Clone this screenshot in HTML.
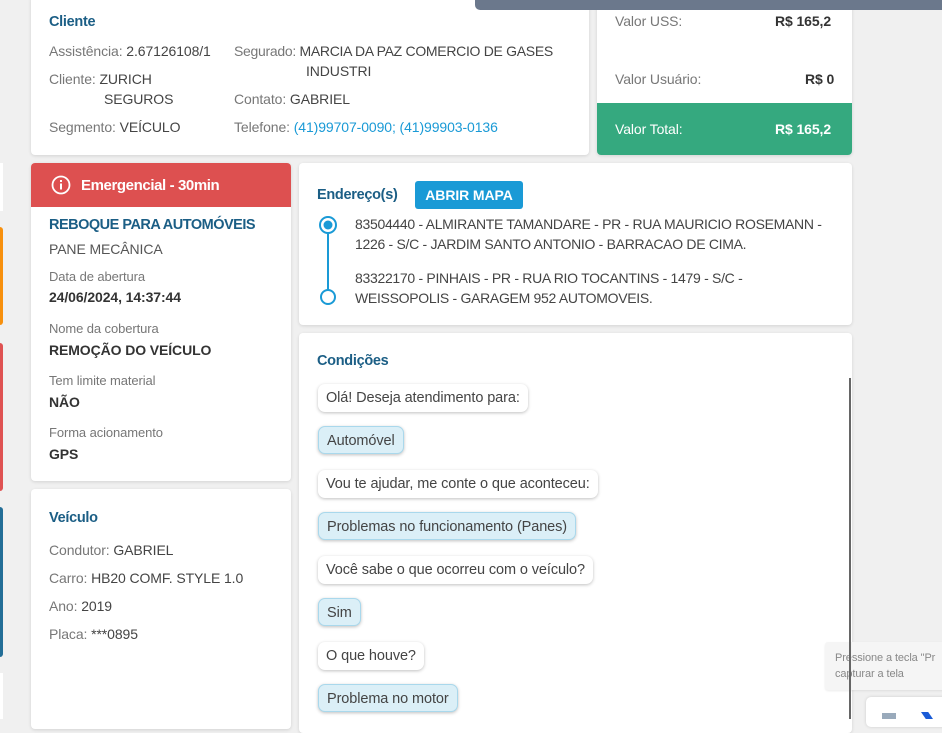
<!DOCTYPE html>
<html><head><meta charset="utf-8"><style>
*{box-sizing:border-box;margin:0;padding:0}
body{width:942px;height:719px;overflow:hidden;background:#f0f0f0;font-family:"Liberation Sans",sans-serif;font-size:14px;color:#444;letter-spacing:-0.1px;position:relative}
.card{position:absolute;background:#fff;border-radius:4px;box-shadow:0 1px 3px rgba(0,0,0,.12)}
.abs{position:absolute;white-space:nowrap}
.t{color:#1b5e85;font-size:14.5px;font-weight:bold;letter-spacing:-0.3px}
.g{color:#777}
.lbl{color:#777;font-size:13px}
.b{font-weight:bold;color:#333}
.bub{position:absolute;left:318px;height:28px;line-height:28px;padding:0 8px;border-radius:7px;background:#fff;box-shadow:0 1px 3px rgba(0,0,0,.25);color:#444;font-size:14.5px;white-space:nowrap;letter-spacing:-0.1px}
.bub.a{background:#dbeff7;border:1px solid #a9d8ec}
</style></head><body>
<div class="abs" style="left:0;top:163px;width:3px;height:48px;background:#fff"></div>
<div class="abs" style="left:0;top:227px;width:3px;height:98px;background:#f7900e;border-radius:0 3px 3px 0"></div>
<div class="abs" style="left:0;top:343px;width:3px;height:148px;background:#df5252;border-radius:0 3px 3px 0"></div>
<div class="abs" style="left:0;top:507px;width:3px;height:150px;background:#236e97;border-radius:0 3px 3px 0"></div>
<div class="abs" style="left:0;top:673px;width:3px;height:46px;background:#fff"></div>

<div class="card" style="left:31px;top:-5px;width:558px;height:160px"></div>
<div class="abs t" style="left:49px;top:14px">Cliente</div>
<div class="abs" style="left:49px;top:43px"><span class="g">Assistência:</span> 2.67126108/1</div>
<div class="abs" style="left:49px;top:71px"><span class="g">Cliente:</span> ZURICH</div>
<div class="abs" style="left:104px;top:91px">SEGUROS</div>
<div class="abs" style="left:49px;top:119px"><span class="g">Segmento:</span> VEÍCULO</div>
<div class="abs" style="left:234px;top:43px;letter-spacing:-0.3px"><span class="g">Segurado:</span> MARCIA DA PAZ COMERCIO DE GASES</div>
<div class="abs" style="left:306px;top:63px">INDUSTRI</div>
<div class="abs" style="left:234px;top:91px"><span class="g">Contato:</span> GABRIEL</div>
<div class="abs" style="left:234px;top:119px"><span class="g">Telefone:</span> <span style="color:#1a9ad6">(41)99707-0090; (41)99903-0136</span></div>

<div class="card" style="left:597px;top:-5px;width:255px;height:160px;overflow:hidden">
<div style="position:absolute;left:0;bottom:0;width:100%;height:52px;background:#35a97f"></div></div>
<div class="abs g" style="left:615px;top:13px">Valor USS:</div>
<div class="abs b" style="left:775px;top:13px">R$ 165,2</div>
<div class="abs g" style="left:615px;top:71px">Valor Usuário:</div>
<div class="abs b" style="left:805px;top:71px">R$ 0</div>
<div class="abs" style="left:615px;top:121px;color:#fff">Valor Total:</div>
<div class="abs" style="left:775px;top:121px;color:#fff;font-weight:bold">R$ 165,2</div>

<div class="abs" style="left:475px;top:0;width:467px;height:10px;background:#6b788c;border-radius:0 0 0 5px"></div>

<div class="card" style="left:31px;top:163px;width:260px;height:318px;overflow:hidden">
<div style="height:44px;background:#dd5050"></div></div>
<svg class="abs" style="left:51px;top:175px" width="20" height="20" viewBox="0 0 20 20"><circle cx="10" cy="10" r="8.5" fill="none" stroke="#fff" stroke-width="1.8"/><rect x="9" y="8.5" width="2" height="6" fill="#fff"/><rect x="9" y="5" width="2" height="2" fill="#fff"/></svg>
<div class="abs" style="left:81px;top:177px;color:#fff;font-weight:bold;font-size:15px;letter-spacing:-0.4px">Emergencial - 30min</div>
<div class="abs t" style="left:49px;top:217px;letter-spacing:-0.5px">REBOQUE PARA AUTOMÓVEIS</div>
<div class="abs" style="left:49px;top:241px;color:#555">PANE MECÂNICA</div>
<div class="abs lbl" style="left:49px;top:269px">Data de abertura</div>
<div class="abs b" style="left:49px;top:289px">24/06/2024, 14:37:44</div>
<div class="abs lbl" style="left:49px;top:321px">Nome da cobertura</div>
<div class="abs b" style="left:49px;top:342px">REMOÇÃO DO VEÍCULO</div>
<div class="abs lbl" style="left:49px;top:373px">Tem limite material</div>
<div class="abs b" style="left:49px;top:394px">NÃO</div>
<div class="abs lbl" style="left:49px;top:425px">Forma acionamento</div>
<div class="abs b" style="left:49px;top:446px">GPS</div>

<div class="card" style="left:31px;top:489px;width:260px;height:240px"></div>
<div class="abs t" style="left:49px;top:510px">Veículo</div>
<div class="abs" style="left:49px;top:542px"><span class="g">Condutor:</span> GABRIEL</div>
<div class="abs" style="left:49px;top:570px"><span class="g">Carro:</span> HB20 COMF. STYLE 1.0</div>
<div class="abs" style="left:49px;top:598px"><span class="g">Ano:</span> 2019</div>
<div class="abs" style="left:49px;top:626px"><span class="g">Placa:</span> ***0895</div>

<div class="card" style="left:299px;top:163px;width:553px;height:162px"></div>
<div class="abs t" style="left:317px;top:187px">Endereço(s)</div>
<div class="abs" style="left:415px;top:181px;width:108px;height:28px;background:#1a9ad6;border-radius:3px;color:#fff;font-weight:bold;text-align:center;line-height:28px;font-size:14px">ABRIR MAPA</div>
<svg class="abs" style="left:316px;top:213px" width="24" height="94"><line x1="12" y1="12" x2="12" y2="84" stroke="#1a9ad6" stroke-width="2"/><circle cx="12" cy="12" r="8" fill="#fff" stroke="#1a9ad6" stroke-width="2"/><circle cx="12" cy="12" r="4.5" fill="#1a9ad6"/><circle cx="12" cy="84" r="7" fill="#fff" stroke="#1a9ad6" stroke-width="2"/></svg>
<div class="abs" style="left:355px;top:214px;line-height:20px;letter-spacing:-0.3px">83504440 - ALMIRANTE TAMANDARE - PR - RUA MAURICIO ROSEMANN -<br>1226 - S/C - JARDIM SANTO ANTONIO - BARRACAO DE CIMA.</div>
<div class="abs" style="left:355px;top:268px;line-height:20px;letter-spacing:-0.3px">83322170 - PINHAIS - PR - RUA RIO TOCANTINS - 1479 - S/C -<br>WEISSOPOLIS - GARAGEM 952 AUTOMOVEIS.</div>

<div class="card" style="left:299px;top:333px;width:553px;height:400px"></div>
<div class="abs t" style="left:317px;top:353px">Condições</div>
<div class="bub" style="top:384px">Olá! Deseja atendimento para:</div>
<div class="bub a" style="top:426px">Automóvel</div>
<div class="bub" style="top:470px">Vou te ajudar, me conte o que aconteceu:</div>
<div class="bub a" style="top:512px">Problemas no funcionamento (Panes)</div>
<div class="bub" style="top:556px">Você sabe o que ocorreu com o veículo?</div>
<div class="bub a" style="top:598px">Sim</div>
<div class="bub" style="top:642px">O que houve?</div>
<div class="bub a" style="top:684px">Problema no motor</div>

<div class="abs" style="left:825px;top:642px;width:130px;height:48px;background:#f5f5f5;border-radius:3px;box-shadow:0 1px 2px rgba(0,0,0,.08);color:#888;font-size:11px;padding:8px 10px;line-height:16px;white-space:normal">Pressione a tecla "Pr<br>capturar a tela</div>
<div class="abs" style="left:849px;top:378px;width:2px;height:341px;background:#666"></div>
<div class="abs" style="left:866px;top:697px;width:90px;height:30px;background:#fff;border-radius:5px;box-shadow:0 0 3px rgba(0,0,0,.15)"></div>
<div class="abs" style="left:882px;top:713px;width:14px;height:6px;background:#9ab"></div>
<div class="abs" style="left:921px;top:712px;width:12px;height:7px;background:#1a5bd6;clip-path:polygon(0 0,60% 0,100% 100%,40% 100%)"></div>
</body></html>
